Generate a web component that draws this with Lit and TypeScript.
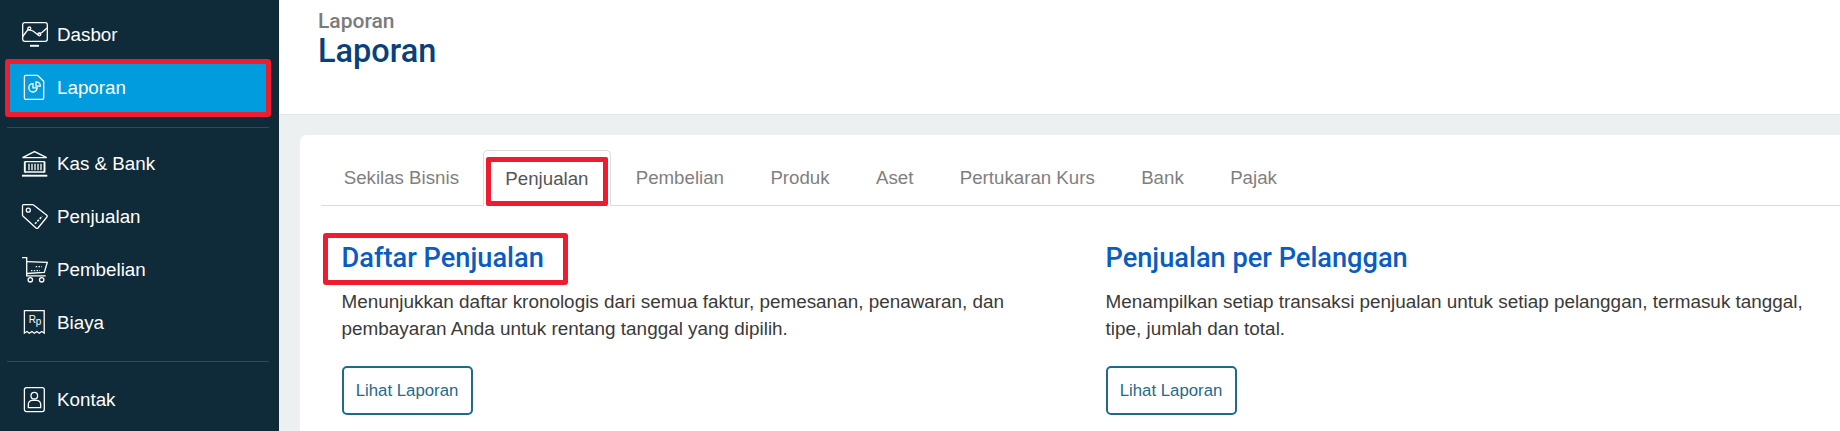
import { LitElement, html, css, svg } from "lit";
import { customElement } from "lit/decorators.js";

const icons: Record<string, unknown> = {
  dash: svg`<rect x="0.7" y="0.7" width="24.6" height="18.6" rx="2"/><path d="M0.7 14.5 L6 7.5 L11 9 L15.5 12.5 L20 10.5 L25 6"/><circle cx="7.3" cy="6.5" r="1.5"/><circle cx="17.3" cy="12.3" r="1.5"/><path class="thick" d="M8 23.8h9"/>`,
  report: svg`<path d="M3.8 0.4H15.5L21.7 6.2V23a1.4 1.4 0 0 1-1.4 1.4H3.8A1.4 1.4 0 0 1 2.4 23V1.8A1.4 1.4 0 0 1 3.8 0.4z"/><path d="M11 8.6a4.2 4.2 0 1 0 4.2 4.2H11z"/><path d="M14 6.8a4.4 4.4 0 0 1 4.4 4.3H14z"/>`,
  bank: svg`<path d="M0.5 6.7 L12.5 0.6 L24.7 6.7 Z"/><path d="M2.8 10.7h19.7M2.8 21h19.7"/><path class="thick" d="M2.8 10.5v11M22.5 10.5v11"/><path d="M7 12.8v6.4M10 12.8v6.4M13 12.8v6.4M16 12.8v6.4M19 12.8v6.4"/><path class="thick" d="M0 24.7h25.3"/>`,
  tag: svg`<path d="M1.7 0.6H10.6a1.5 1.5 0 0 1 1 .4L24.8 11.2a1.3 1.3 0 0 1 .1 1.8L16 24a1.4 1.4 0 0 1-2 .1L.9 12a1.4 1.4 0 0 1-.4-1V1.8A1.2 1.2 0 0 1 1.7.6z"/><circle cx="6.3" cy="6.2" r="2"/><path d="M13 19.8L20.3 12.2" stroke-dasharray="2.2 1.2" stroke-width="1.6"/>`,
  cart: svg`<path d="M0 0.6h4.7v18.2h19"/><path d="M4.7 4.7L25.3 5.3 22.3 15.5 4.7 16.5"/><path d="M13.7 9.7h6.2M9 13.7h9" stroke-dasharray="1.4 1.4" stroke-width="1.3"/><circle cx="8.3" cy="22.8" r="2.2"/><circle cx="19.7" cy="22.8" r="2.2"/>`,
  rp: svg`<path d="M2.4 23V0.6H22.2V23l-2.5-1.5-2.4 1.8-2.5-1.8-2.4 1.8-2.5-1.8-2.5 1.8-2.4-1.8z"/><text x="6.8" y="13.2" class="rp">R<tspan dy="1.8">p</tspan></text>`,
  contact: svg`<rect x="2.4" y="0.6" width="19.9" height="24" rx="2"/><circle cx="12.3" cy="8.7" r="3.3"/><path d="M6.3 20.6v-3a4 4 0 0 1 4-4.3h4.4a4 4 0 0 1 4 4.3v3z"/>`,
};

const tabs = ["Sekilas Bisnis", "Penjualan", "Pembelian", "Produk", "Aset", "Pertukaran Kurs", "Bank", "Pajak"];

@customElement("app-root")
export class AppRoot extends LitElement {
  static styles = css`
    :host { display: block; width: 1840px; height: 431px; overflow: hidden; font-family: "Liberation Sans", Arial, sans-serif; }
    .page { display: flex; height: 431px; }
    .side { width: 279px; flex: none; background: #0f2a38; color: #fff; display: flex; flex-direction: column; padding: 8px 10px 0 7px; box-sizing: border-box; }
    .item { height: 53px; flex: none; display: flex; align-items: center; gap: 9px; padding-left: 15px; font-size: 18.8px; box-sizing: border-box; }
    .item svg { width: 26px; height: 26px; flex: none; fill: none; stroke: #fff; stroke-width: 1.3; overflow: visible; }
    .item svg .thick { stroke-width: 1.9; }
    .item svg .rp { font: 400 10px "Liberation Sans", sans-serif; fill: #fff; stroke: none; letter-spacing: -0.3px; }
    .item.active { height: 58px; margin: -2px 0 0 -2px; width: 266px; background: #009cde; border: 5px solid #ed1c2e; border-radius: 3px; padding-left: 12px; }
    .rule { height: 1px; background: #2f4a58; margin: 10px 0 9px; flex: none; }
    .rule.two { margin: 12px 0 11px; }
    .main { flex: 1; min-width: 0; background: #ecf0f1; display: flex; flex-direction: column; }
    .head { height: 115px; flex: none; background: #fff; border-bottom: 1px solid #e4e7e8; padding: 10px 0 0 39px; box-sizing: border-box; }
    .crumb { font: 500 21px/22px Roboto, sans-serif; color: #7b7b7b; }
    .title { font: 500 32.5px/38px Roboto, sans-serif; color: #0a4078; }
    .card { flex: 1; margin: 20px 0 0 21px; background: #fff; border-radius: 7px 0 0 0; padding: 15px 0 0 20.5px; }
    .tabs { display: flex; border-bottom: 1px solid #dcdcdc; height: 56px; box-sizing: border-box; }
    .tab { position: relative; height: 55px; box-sizing: border-box; padding: 0 22.2px; display: flex; align-items: center; font-size: 18.7px; color: #7f7f7f; border: 1px solid transparent; border-bottom: 0; }
    .tab.on { color: #555; background: #fff; border-color: #dcdcdc; border-radius: 5px 5px 0 0; padding: 0 21px; margin: 0 2px 0 1.2px; height: 56px; }
    .tab.on::after { content: ""; position: absolute; left: 2px; top: 6px; width: 122px; height: 49px; box-sizing: border-box; border: 5px solid #ed1c2e; border-radius: 2px; }
    .cols { display: flex; }
    .col { width: 764px; flex: none; padding-left: 21px; box-sizing: border-box; }
    .col h2 { position: relative; margin: 0; padding: 36px 0 13.5px; font: 500 27.2px/32px Roboto, sans-serif; color: #0a5cc2; }
    .mark { position: absolute; left: -18.2px; top: 27px; width: 245px; height: 52px; box-sizing: border-box; border: 5px solid #ed1c2e; border-radius: 3px; }
    .col p { margin: 0; font-size: 18.9px; line-height: 27.4px; color: #3a3a3a; width: 700px; }
    .btn { display: flex; align-items: center; justify-content: center; margin-top: 24px; width: 131px; height: 49px; box-sizing: border-box; border: 2px solid #1f6a8c; border-radius: 5px; font-size: 16.8px; color: #1f6a8c; background: #fff; }
  `;

  private row(icon: string, label: string, active = false) {
    return html`<div class="item ${active ? "active" : ""}"><svg viewBox="0 0 26 26">${icons[icon]}</svg><span>${label}</span></div>`;
  }

  render() {
    return html`<div class="page">
      <nav class="side">
        ${this.row("dash", "Dasbor")}
        ${this.row("report", "Laporan", true)}
        <div class="rule"></div>
        ${this.row("bank", "Kas & Bank")}
        ${this.row("tag", "Penjualan")}
        ${this.row("cart", "Pembelian")}
        ${this.row("rp", "Biaya")}
        <div class="rule two"></div>
        ${this.row("contact", "Kontak")}
      </nav>
      <div class="main">
        <header class="head">
          <div class="crumb">Laporan</div>
          <div class="title">Laporan</div>
        </header>
        <section class="card">
          <div class="tabs">
            ${tabs.map((t) => html`<div class="tab ${t === "Penjualan" ? "on" : ""}">${t}</div>`)}
          </div>
          <div class="cols">
            <div class="col">
              <h2><span class="mark"></span>Daftar Penjualan</h2>
              <p>Menunjukkan daftar kronologis dari semua faktur, pemesanan, penawaran, dan pembayaran Anda untuk rentang tanggal yang dipilih.</p>
              <div class="btn">Lihat Laporan</div>
            </div>
            <div class="col">
              <h2>Penjualan per Pelanggan</h2>
              <p>Menampilkan setiap transaksi penjualan untuk setiap pelanggan, termasuk tanggal, tipe, jumlah dan total.</p>
              <div class="btn">Lihat Laporan</div>
            </div>
          </div>
        </section>
      </div>
    </div>`;
  }
}
